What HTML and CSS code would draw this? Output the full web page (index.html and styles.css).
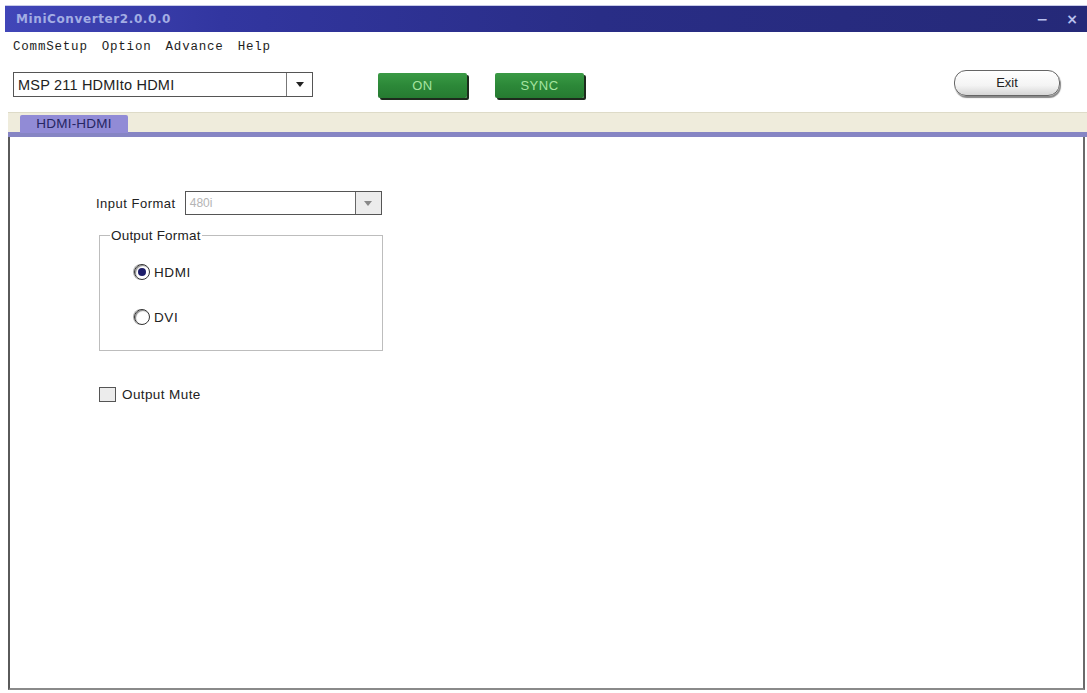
FILE: index.html
```html
<!doctype html>
<html lang="en">
    <head>
        <meta charset="utf-8">
        <title>MiniConverter2.0.0.0</title>
        <link rel="stylesheet" href="styles.css">
    </head>
    <body>
        <div class="window">
            <div class="window__title">
                <span class="window__name">MiniConverter2.0.0.0</span>
                <span class="window__ctrl">&minus;</span>
                <span class="window__ctrl window__ctrl--close">&times;</span>
            </div>
            <ul class="window__menu">
                <li>CommSetup</li>
                <li>Option</li>
                <li>Advance</li>
                <li>Help</li>
            </ul>
            <div class="toolbar">
                <div class="combo toolbar__device">
                    <span class="combo__text">MSP 211 HDMIto HDMI</span>
                    <span class="combo__btn"><i class="combo__arrow"></i></span>
                </div>
                <div class="btn-green toolbar__on">ON</div>
                <div class="btn-green toolbar__sync">SYNC</div>
                <div class="btn-exit">Exit</div>
            </div>
            <div class="tabs">
                <div class="tabs__tab">HDMI-HDMI</div>
            </div>
            <div class="panel">
                <div class="panel__row">
                    <span class="panel__label">Input Format</span>
                    <div class="combo combo--disabled panel__input">
                        <span class="combo__text">480i</span>
                        <span class="combo__btn"><i class="combo__arrow"></i></span>
                    </div>
                </div>
                <fieldset class="group">
                    <legend class="group__legend">Output Format</legend>
                    <div class="radio radio--checked"><i class="radio__dot"></i>HDMI</div>
                    <div class="radio"><i class="radio__dot"></i>DVI</div>
                </fieldset>
                <div class="check"><i class="check__box"></i>Output Mute</div>
            </div>
        </div>
    </body>
</html>
```

FILE: styles.css
```css
body {
    background: #fff;
    color: #222;
    font-family: "Liberation Sans", Arial, sans-serif;
    margin: 0;
}

.window {
    width: 1087px;
    height: 693px;
    overflow: hidden;
}

.window__title {
    align-items: center;
    background: linear-gradient(to right, #4146b8 0%, #3236a0 20%, #292d86 55%, #252978 100%);
    border-top: 1px solid #c8cbe8;
    display: flex;
    height: 26px;
    margin: 5px 0 0 5px;
    padding: 0 0 0 11px;
}

.window__name {
    color: #a3ade4;
    flex-grow: 1;
    font-family: "DejaVu Sans", Verdana, sans-serif;
    font-size: 12px;
    font-weight: bold;
    letter-spacing: 0.6px;
}

.window__ctrl {
    color: #b9c0ee;
    font-family: "DejaVu Sans", sans-serif;
    font-size: 14px;
    font-weight: bold;
    margin-right: 18px;
}

.window__ctrl--close {
    margin-right: 9px;
}

.window__menu {
    display: flex;
    font-family: "Liberation Mono", "Courier New", monospace;
    font-size: 12.5px;
    gap: 14px;
    height: 30px;
    line-height: 30px;
    list-style: none;
    margin: 0;
    padding: 0 0 0 13px;
}

.window__menu li {
    color: #1e1e1e;
    letter-spacing: 0.8px;
}

.toolbar {
    align-items: flex-start;
    display: flex;
    height: 50px;
}

.combo {
    background: #fff;
    border: 1px solid #555;
    box-sizing: border-box;
    display: flex;
}

.combo__text {
    align-items: center;
    display: flex;
    flex-grow: 1;
    padding-left: 4px;
}

.combo__btn {
    align-items: center;
    border-left: 1px solid #777;
    display: flex;
    justify-content: center;
    width: 25px;
}

.combo__arrow {
    border-left: 4px solid transparent;
    border-right: 4px solid transparent;
    border-top: 5px solid #222;
    height: 0;
    width: 0;
}

.toolbar__device {
    font-size: 14.5px;
    height: 25px;
    letter-spacing: 0.2px;
    margin: 10px 0 0 13px;
    width: 300px;
}

.btn-green {
    background: linear-gradient(#3a9a45, #2c8838 50%, #267a31);
    border-radius: 2px;
    box-shadow: 2px 2px 0 #1d2a1d;
    box-sizing: border-box;
    color: #a6e4a0;
    font-size: 13px;
    height: 25px;
    letter-spacing: 0.5px;
    line-height: 25px;
    margin-top: 11px;
    text-align: center;
    width: 89px;
}

.toolbar__on {
    margin-left: 65px;
}

.toolbar__sync {
    margin-left: 28px;
}

.btn-exit {
    background: linear-gradient(#fff, #f4f4f4 60%, #d6d6d6);
    border: 1px solid #666;
    border-radius: 12px;
    box-shadow: 1px 2px 1px #888;
    box-sizing: border-box;
    color: #222;
    font-size: 13px;
    height: 26px;
    line-height: 24px;
    margin: 8px 27px 0 auto;
    text-align: center;
    width: 106px;
}

.tabs {
    background: #efecdc;
    border-bottom: 5px solid #8685c4;
    border-top: 1px solid #dedbc8;
    box-sizing: border-box;
    display: flex;
    height: 25px;
    margin-left: 8px;
    padding: 2px 0 0 12px;
}

.tabs__tab {
    background: #918bd6;
    border-radius: 2px 2px 0 0;
    color: #262663;
    font-size: 13.5px;
    height: 18px;
    letter-spacing: 0.2px;
    line-height: 18px;
    text-align: center;
    width: 108px;
}

.panel {
    border-bottom: 2px solid #8a8a8a;
    border-left: 2px solid #5a5a5a;
    border-right: 2px solid #6a6a6a;
    box-sizing: border-box;
    height: 553px;
    margin: 0 2px 0 8px;
    padding: 54px 0 0 86px;
}

.panel__row {
    align-items: center;
    display: flex;
    gap: 9px;
}

.panel__label {
    font-size: 13px;
    letter-spacing: 0.5px;
}

.panel__input {
    height: 24px;
    width: 197px;
}

.combo--disabled .combo__text {
    color: #b4b4b4;
    font-size: 12px;
}

.combo--disabled .combo__btn {
    background: #ececec;
    border-left-color: #666;
}

.combo--disabled .combo__arrow {
    border-top-color: #888;
}

.group {
    border: 1px solid #bdbdbd;
    box-sizing: border-box;
    height: 123px;
    margin: 13px 0 0 3px;
    padding: 19px 0 0 10px;
    width: 284px;
}

.group__legend {
    font-size: 13.5px;
    letter-spacing: 0.2px;
    padding: 0 1px;
}

.radio {
    align-items: center;
    display: flex;
    font-size: 13.5px;
    gap: 4px;
    height: 20px;
    letter-spacing: 0.6px;
    margin-left: 24px;
}

.radio + .radio {
    margin-top: 25px;
}

.radio__dot {
    border: 1px solid #333;
    border-radius: 50%;
    box-shadow: inset 1px 1px 1px #888, -1px 0 0 #aaa;
    box-sizing: border-box;
    display: inline-block;
    height: 16px;
    position: relative;
    width: 16px;
}

.radio--checked .radio__dot::after {
    background: #1d1d6a;
    border-radius: 50%;
    content: "";
    height: 8px;
    left: 3px;
    position: absolute;
    top: 3px;
    width: 8px;
}

.check {
    align-items: center;
    display: flex;
    font-size: 13.5px;
    gap: 6px;
    letter-spacing: 0.4px;
    margin: 36px 0 0 3px;
}

.check__box {
    background: #ececec;
    border: 1px solid #555;
    box-sizing: border-box;
    display: inline-block;
    height: 15px;
    width: 17px;
}
```
